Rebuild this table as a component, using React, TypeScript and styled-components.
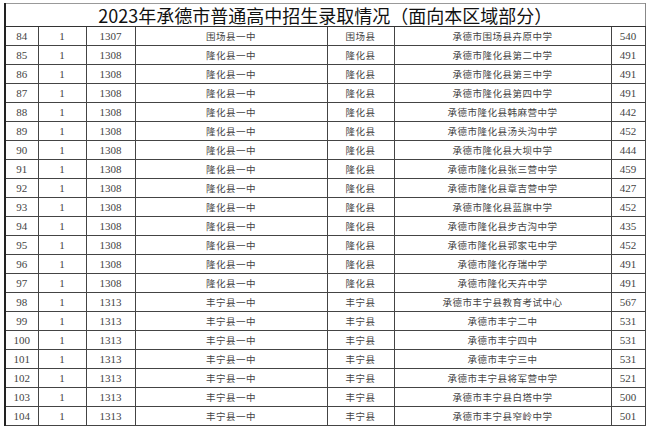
import React from 'react'
import styled, { createGlobalStyle } from 'styled-components'

type Row = [number, number, string, string, string, string, number]

const rows: Row[] = [
  [84, 1, '1307', '围场县一中', '围场县', '承德市围场县卉原中学', 540],
  [85, 1, '1308', '隆化县一中', '隆化县', '承德市隆化县第二中学', 491],
  [86, 1, '1308', '隆化县一中', '隆化县', '承德市隆化县第三中学', 491],
  [87, 1, '1308', '隆化县一中', '隆化县', '承德市隆化县第四中学', 491],
  [88, 1, '1308', '隆化县一中', '隆化县', '承德市隆化县韩麻营中学', 442],
  [89, 1, '1308', '隆化县一中', '隆化县', '承德市隆化县汤头沟中学', 452],
  [90, 1, '1308', '隆化县一中', '隆化县', '承德市隆化县大坝中学', 444],
  [91, 1, '1308', '隆化县一中', '隆化县', '承德市隆化县张三营中学', 459],
  [92, 1, '1308', '隆化县一中', '隆化县', '承德市隆化县章吉营中学', 427],
  [93, 1, '1308', '隆化县一中', '隆化县', '承德市隆化县蓝旗中学', 452],
  [94, 1, '1308', '隆化县一中', '隆化县', '承德市隆化县步古沟中学', 435],
  [95, 1, '1308', '隆化县一中', '隆化县', '承德市隆化县郭家屯中学', 452],
  [96, 1, '1308', '隆化县一中', '隆化县', '承德市隆化存瑞中学', 491],
  [97, 1, '1308', '隆化县一中', '隆化县', '承德市隆化天卉中学', 491],
  [98, 1, '1313', '丰宁县一中', '丰宁县', '承德市丰宁县教育考试中心', 567],
  [99, 1, '1313', '丰宁县一中', '丰宁县', '承德市丰宁二中', 531],
  [100, 1, '1313', '丰宁县一中', '丰宁县', '承德市丰宁四中', 531],
  [101, 1, '1313', '丰宁县一中', '丰宁县', '承德市丰宁三中', 531],
  [102, 1, '1313', '丰宁县一中', '丰宁县', '承德市丰宁县将军营中学', 521],
  [103, 1, '1313', '丰宁县一中', '丰宁县', '承德市丰宁县白塔中学', 500],
  [104, 1, '1313', '丰宁县一中', '丰宁县', '承德市丰宁县窄岭中学', 501],
]

const widths = [33, 48, 49, 192, 67, 217, 34]

const App: React.FC = () => {
  return (
    <Page>
      <GlobalStyle />
      <Sheet>
        <colgroup>
          {widths.map((w, i) => (
            <col key={i} style={{ width: w }} />
          ))}
        </colgroup>
        <thead>
          <tr>
            <TitleCell colSpan={7}>2023年承德市普通高中招生录取情况（面向本区域部分）</TitleCell>
          </tr>
        </thead>
        <tbody>
          {rows.map((r) => (
            <tr key={r[0]}>
              <NumCell>{r[0]}</NumCell>
              <NumCell>{r[1]}</NumCell>
              <NumCell>{r[2]}</NumCell>
              <TextCell>{r[3]}</TextCell>
              <TextCell>{r[4]}</TextCell>
              <TextCell>{r[5]}</TextCell>
              <NumCell>{r[6]}</NumCell>
            </tr>
          ))}
        </tbody>
      </Sheet>
    </Page>
  )
}

const GlobalStyle = createGlobalStyle`
  html, body {
    margin: 0;
    padding: 0;
    background: #ffffff;
  }
`

const Page = styled.div`
  width: 651px;
  height: 429px;
  padding: 3px 0 0 4px;
  box-sizing: border-box;
  overflow: hidden;
`

const Sheet = styled.table`
  border-collapse: collapse;
  table-layout: fixed;
  width: 640px;
  border-left: 2px solid #222;
  border-right: 1px solid #888;
  border-top: 1px solid #999;
  border-bottom: 1px solid #222;
`

const TitleCell = styled.th`
  height: 22px;
  padding: 0;
  font-family: 'Noto Sans CJK SC', 'Liberation Sans', sans-serif;
  font-size: 18px;
  font-weight: 400;
  line-height: 22px;
  color: #111;
  text-align: center;
  border-bottom: 1px solid #333;
`

const Cell = styled.td`
  height: 18px;
  padding: 0;
  line-height: 18px;
  text-align: center;
  color: #444;
  border: 1px solid #444;
  white-space: nowrap;
  overflow: hidden;
`

const NumCell = styled(Cell)`
  font-family: 'Liberation Serif', serif;
  font-size: 11px;
`

const TextCell = styled(Cell)`
  font-family: 'Noto Sans CJK SC', sans-serif;
  font-size: 9.5px;
  letter-spacing: 0.5px;
`

export default App
